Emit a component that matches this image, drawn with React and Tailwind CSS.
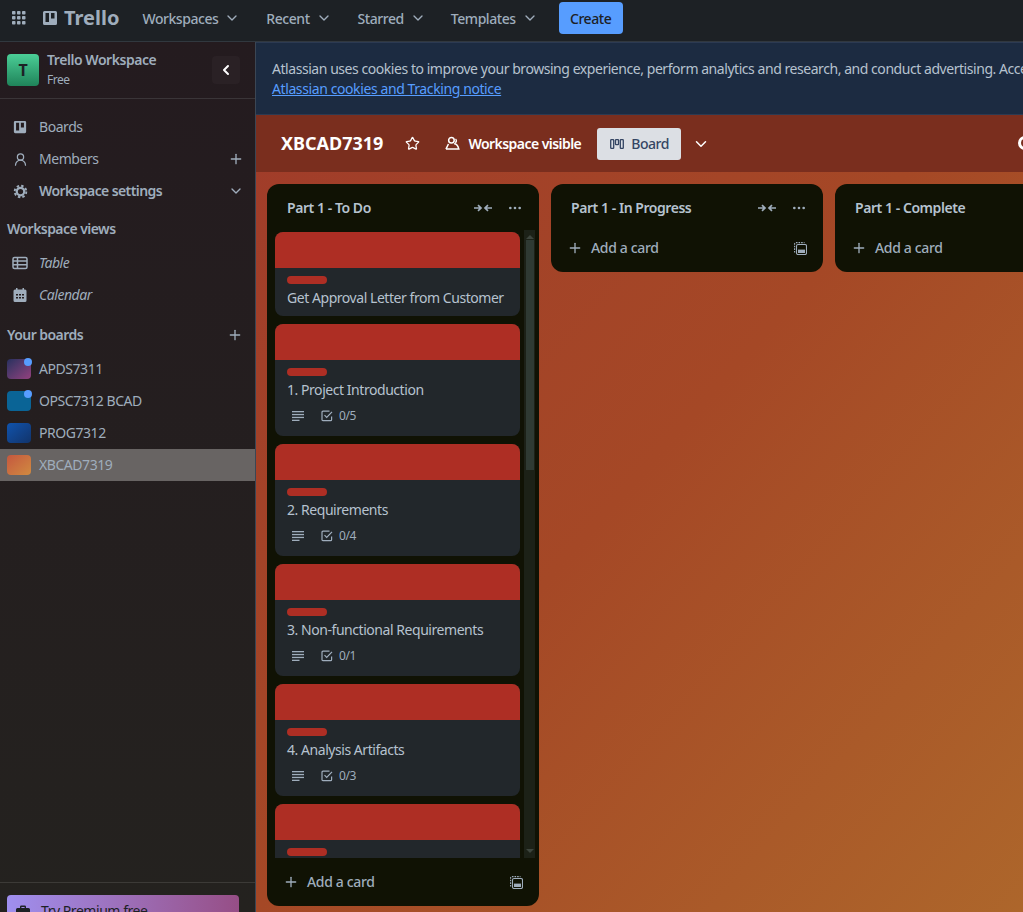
import { Plus, ChevronDown, ChevronLeft, Star, Ellipsis, UserRound } from "lucide-react";

const font = { fontFamily: '"Noto Sans", "Open Sans", sans-serif' };

const navItems = ["Workspaces", "Recent", "Starred", "Templates"];

const boards = [
  { name: "APDS7311", thumb: "bg-gradient-to-br from-[#27305f] to-[#93407f]", dot: true },
  { name: "OPSC7312 BCAD", thumb: "bg-[#0a6496]", dot: true },
  { name: "PROG7312", thumb: "bg-gradient-to-br from-[#0f53ad] to-[#11346b]" },
  { name: "XBCAD7319", thumb: "bg-gradient-to-br from-[#c4573f] to-[#d08a40]", active: true },
];

const cards = [
  { title: "Get Approval Letter from Customer" },
  { title: "1. Project Introduction", count: "0/5" },
  { title: "2. Requirements", count: "0/4" },
  { title: "3. Non-functional Requirements", count: "0/1" },
  { title: "4. Analysis Artifacts", count: "0/3" },
  { title: "5. Use Cases", count: "0/2" },
];

function AppGrid() {
  return (
    <svg width="16" height="16" viewBox="0 0 16 16" fill="currentColor">
      {[1, 6, 11].map((y) =>
        [1, 6, 11].map((x) => <rect key={`${x}-${y}`} x={x} y={y} width="3.5" height="3.5" rx="0.8" />)
      )}
    </svg>
  );
}

function BoardIcon({ size = 16 }) {
  return (
    <svg width={size} height={size} viewBox="0 0 16 16">
      <path
        fill="currentColor"
        fillRule="evenodd"
        d="M2.5 1h11A1.5 1.5 0 0 1 15 2.5v11a1.5 1.5 0 0 1-1.5 1.5h-11A1.5 1.5 0 0 1 1 13.5v-11A1.5 1.5 0 0 1 2.5 1zM3.5 3v9h3.5V3H3.5zM9 3v5.5h3.5V3H9z"
      />
    </svg>
  );
}

function GearIcon() {
  return (
    <svg width="15" height="15" viewBox="0 0 16 16" fill="none" stroke="currentColor">
      <circle cx="8" cy="8" r="4" strokeWidth="2.4" />
      <circle cx="8" cy="8" r="6.2" strokeWidth="2" strokeDasharray="2.6 2.27" />
    </svg>
  );
}

function TableIcon() {
  return (
    <svg width="16" height="14" viewBox="0 0 16 14" fill="none" stroke="currentColor" strokeWidth="1.5">
      <rect x="1" y="1.5" width="14" height="11" rx="1.5" />
      <path d="M1 5h14M1 8.8h14M5.5 1.5v11" />
    </svg>
  );
}

function CalendarIcon() {
  return (
    <svg width="14" height="14" viewBox="0 0 14 14" fill="currentColor">
      <path
        fillRule="evenodd"
        d="M3 0h1.5v1.5h5V0H11v1.5h1A1.5 1.5 0 0 1 13.5 3v9.5A1.5 1.5 0 0 1 12 14H2A1.5 1.5 0 0 1 .5 12.5V3A1.5 1.5 0 0 1 2 1.5h1V0zM3 6v1.5h2V6H3zm3 0v1.5h2V6H6zm3 0v1.5h2V6H9zM3 9v1.5h2V9H3zm3 0v1.5h2V9H6zm3 0v1.5h2V9H9z"
      />
    </svg>
  );
}

function CollapseIcon() {
  return (
    <svg width="18" height="10" viewBox="0 0 18 10" fill="none" stroke="currentColor" strokeWidth="1.7">
      <path d="M0 5h6.5M4 2.2 7 5 4 7.8M18 5h-6.5M14 2.2 11 5l3 2.8" />
    </svg>
  );
}

function TemplateIcon() {
  return (
    <svg width="13" height="13" viewBox="0 0 13 13" fill="none" stroke="currentColor" strokeWidth="1.1">
      <rect x="2.5" y="2.5" width="10" height="10" rx="1.5" />
      <path d="M.6 10.5V2A1.4 1.4 0 0 1 2 .6h8.5" strokeDasharray="1.6 1" />
      <rect x="4" y="7.6" width="7" height="3.4" fill="currentColor" stroke="none" />
    </svg>
  );
}

function DescriptionIcon() {
  return (
    <svg width="12" height="10" viewBox="0 0 12 10" fill="currentColor">
      <rect width="12" height="1.3" />
      <rect y="2.9" width="12" height="1.3" />
      <rect y="5.8" width="12" height="1.3" />
      <rect y="8.7" width="7.5" height="1.3" />
    </svg>
  );
}

function ChecklistIcon() {
  return (
    <svg width="12" height="12" viewBox="0 0 12 12" fill="none" stroke="currentColor" strokeWidth="1.2">
      <path d="M10.6 6.5v3.2a1 1 0 0 1-1 1H2a1 1 0 0 1-1-1V2.2a1 1 0 0 1 1-1h6.5" />
      <path d="M3.5 5.2 5.7 7.5 11 1.8" />
    </svg>
  );
}

function VisibleIcon() {
  return (
    <svg width="15" height="15" viewBox="0 0 14 14" fill="none" stroke="currentColor" strokeWidth="1.4">
      <circle cx="6" cy="4" r="2.6" />
      <path d="M.9 12.2 3.2 7.5M.9 12.2h8.8M8.5 7.2c2 0 3.5 1.2 4.4 5H9.7M9.5 6.2a2 2 0 0 0 .3-3.4" />
    </svg>
  );
}

function BoardViewIcon() {
  return (
    <svg width="14" height="10" viewBox="0 0 14 10" fill="none" stroke="currentColor" strokeWidth="1.3">
      <rect x="0.7" y="0.7" width="3" height="8.6" rx="0.6" />
      <rect x="5.5" y="0.7" width="3" height="5" rx="0.6" />
      <rect x="10.3" y="0.7" width="3" height="8.6" rx="0.6" />
    </svg>
  );
}

function BagIcon() {
  return (
    <svg width="14" height="14" viewBox="0 0 14 14" fill="currentColor">
      <path
        fillRule="evenodd"
        d="M4 3V1.8A1.3 1.3 0 0 1 5.3.5h3.4A1.3 1.3 0 0 1 10 1.8V3h2.5A1.5 1.5 0 0 1 14 4.5v7a1.5 1.5 0 0 1-1.5 1.5h-11A1.5 1.5 0 0 1 0 11.5v-7A1.5 1.5 0 0 1 1.5 3H4zm1.4 0h3.2V2H5.4v1z"
      />
    </svg>
  );
}

function SideRow({ icon, right, bold, italic, children }) {
  return (
    <div className="flex h-8 items-center pl-3 pr-[11px] text-[#9fadbc]">
      <span className="flex w-4 justify-center">{icon}</span>
      <span className={`ml-[11px] flex-1 pb-0.5 ${bold ? "font-semibold tracking-[-0.6px]" : ""} ${italic ? "italic" : ""}`}>{children}</span>
      {right}
    </div>
  );
}

function Card({ title, count }) {
  return (
    <div className="shrink-0 overflow-hidden rounded-lg bg-[#22272b] pb-2">
      <div className="h-9 bg-[#ae2e24]" />
      <div className="ml-3 mt-2 h-2 w-10 rounded bg-[#ae2e24]" />
      <div className="ml-3 mt-1 h-5 leading-5 text-[#b6c2cf]">{title}</div>
      {count && (
        <div className="ml-[17px] mt-1 flex h-6 items-center text-[12px] text-[#9fadbc]">
          <DescriptionIcon />
          <span className="ml-[17px]"><ChecklistIcon /></span>
          <span className="ml-1.5">{count}</span>
        </div>
      )}
    </div>
  );
}

function ListHead({ title }) {
  return (
    <div className="flex h-12 shrink-0 items-center pl-5 pr-4 text-[#b6c2cf]">
      <span className="flex-1 pb-0.5 font-semibold">{title}</span>
      <span className="text-[#9fadbc]"><CollapseIcon /></span>
      <Ellipsis size={16} className="ml-[15px] text-[#9fadbc]" />
    </div>
  );
}

function AddCard({ short }) {
  return (
    <div className={`flex shrink-0 items-center pl-4 pr-4 text-[#9fadbc] ${short ? "h-10 pb-2" : "h-12"}`}>
      <Plus size={16} />
      <span className="ml-2 flex-1 pb-0.5 font-medium tracking-[-0.35px]">Add a card</span>
      <TemplateIcon />
    </div>
  );
}

export default function App() {
  return (
    <div style={font} className="flex h-screen w-screen flex-col overflow-hidden bg-[#1d2125] text-[14px] tracking-[-0.45px]">
      {/* Top bar */}
      <header className="flex h-[42px] shrink-0 items-center border-b border-[#31383f] bg-[#1d2125] pb-[5px] pl-[11px] text-[#9fadbc]">
        <AppGrid />
        <div className="ml-[15px] flex items-center">
          <BoardIcon />
          <span className="ml-1.5 text-[20px] font-bold leading-none tracking-normal">Trello</span>
        </div>
        {navItems.map((n, i) => (
          <div key={n} className={`flex items-center ${i === 0 ? "ml-[23px]" : i === 3 ? "ml-[25px]" : "ml-[26px]"}`}>
            <span className="font-medium">{n}</span>
            <ChevronDown size={16} className="ml-1.5" />
          </div>
        ))}
        <button className="ml-[21px] h-8 w-16 rounded bg-[#579dff] font-medium text-[#1d2125]">Create</button>
      </header>

      <div className="flex min-h-0 flex-1">
        {/* Sidebar */}
        <aside className="flex w-[256px] shrink-0 flex-col border-r border-[#3b4654] bg-gradient-to-b from-[#241b1f] to-[#24221f]">
          <div className="flex h-[57px] shrink-0 items-center border-b border-[#3a3538] pl-[7px] pr-[15px]">
            <div className="flex h-8 w-8 items-center justify-center rounded bg-gradient-to-b from-[#4bce97] to-[#1f845a] text-[16px] font-bold text-[#1d2125]">T</div>
            <div className="ml-2 flex-1 text-[#9fadbc]">
              <div className="font-semibold leading-5">Trello Workspace</div>
              <div className="text-[12px] leading-5">Free</div>
            </div>
            <div className="flex h-7 w-7 items-center justify-center rounded bg-[#2a2125] text-white">
              <ChevronLeft size={16} strokeWidth={3} />
            </div>
          </div>

          <div className="mt-3">
            <SideRow icon={<BoardIcon size={14} />}>Boards</SideRow>
            <SideRow icon={<UserRound size={15} />} right={<Plus size={16} />}>Members</SideRow>
            <SideRow icon={<GearIcon />} bold right={<ChevronDown size={16} />}>Workspace settings</SideRow>
          </div>

          <div className="mt-[6px] flex h-8 items-center pb-0.5 pl-[7px] font-semibold tracking-[-0.55px] text-[#9fadbc]">Workspace views</div>
          <div className="mt-[2px]">
            <SideRow italic icon={<TableIcon />}>Table</SideRow>
            <SideRow italic icon={<CalendarIcon />}>Calendar</SideRow>
          </div>

          <div className="mt-[8px] flex h-8 items-center justify-between pl-[7px] pr-3 font-semibold tracking-[-0.55px] text-[#9fadbc]">
            <span className="pb-0.5">Your boards</span>
            <Plus size={16} />
          </div>
          <div className="mt-[2px]">
            {boards.map((b) => (
              <div key={b.name} className={`flex h-8 items-center pl-[7px] text-[#9fadbc] ${b.active ? "bg-[#686463]" : ""}`}>
                <div className={`relative h-5 w-6 rounded-sm ${b.thumb}`}>
                  {b.dot && <span className="absolute -right-[1px] -top-[1px] h-2 w-2 rounded-full bg-[#579dff]" />}
                </div>
                <span className="ml-2 pb-0.5">{b.name}</span>
              </div>
            ))}
          </div>

          <div className="mt-auto h-[30px] shrink-0 border-t border-[#3c3a37] pl-[7px] pt-3">
            <div className="flex h-10 w-[232px] rounded-t-sm bg-gradient-to-r from-[#9f8fef] to-[#964e86] pl-[9px] pt-[10px] text-[#1d2125]">
              <BagIcon />
              <span className="-mt-[5px] ml-[11px]">Try Premium free</span>
            </div>
          </div>
        </aside>

        {/* Main */}
        <main className="flex min-w-0 flex-1 flex-col bg-gradient-to-br from-[#a03b2a] via-[#a54826] to-[#ad662b]">
          <div className="h-[73px] shrink-0 whitespace-nowrap border-y border-[#2c3a52] bg-[#1c2b41] pl-4 pt-[16px] leading-5 text-[#b6c2cf]">
            <div>Atlassian uses cookies to improve your browsing experience, perform analytics and research, and conduct advertising. Accept all cookies</div>
            <a className="tracking-[-0.4px] text-[#579dff] underline">Atlassian cookies and Tracking notice</a>
          </div>

          <div className="relative flex h-[57px] shrink-0 items-center bg-[#7a2e1e] pl-[25px] text-white">
            <span className="text-[18px] font-bold tracking-normal">XBCAD7319</span>
            <Star size={15} strokeWidth={2} className="ml-[22px]" />
            <span className="ml-[25px]"><VisibleIcon /></span>
            <span className="ml-2 font-semibold tracking-[-0.55px]">Workspace visible</span>
            <div className="ml-4 flex h-8 w-[84px] items-center rounded-[3px] bg-[#dcdfe4] pl-[13px] text-[#344563]">
              <BoardViewIcon />
              <span className="ml-[7px] font-medium">Board</span>
            </div>
            <ChevronDown size={18} className="ml-[11px]" />
            <span className="absolute left-[762px] top-[21px] h-3.5 w-3.5 rounded-full border-[3px] border-white" />
          </div>

          {/* Lists */}
          <div className="flex items-start gap-3 overflow-hidden pl-[11px] pt-3">
            <section className="flex h-[722px] w-[272px] shrink-0 flex-col rounded-xl bg-[#101204]">
              <ListHead title="Part 1 - To Do" />
              <div className="flex min-h-0 flex-1 pl-2">
                <div className="flex w-[245px] flex-col gap-2 overflow-hidden">
                  {cards.map((c) => <Card key={c.title} {...c} />)}
                </div>
                <div className="ml-1 -mt-[2px] flex w-[11px] flex-col items-center bg-[#1c2117]">
                  <span className="mt-[5px] h-0 w-0 border-x-[4px] border-b-[4px] border-x-transparent border-b-[#3d453d]" />
                  <div className="mt-[1px] h-[230px] w-[8px] bg-[#2f3a33]" />
                  <span className="mb-[5px] mt-auto h-0 w-0 border-x-[4px] border-t-[4px] border-x-transparent border-t-[#3d453d]" />
                </div>
              </div>
              <AddCard />
            </section>

            <section className="w-[272px] shrink-0 rounded-xl bg-[#101204]">
              <ListHead title="Part 1 - In Progress" />
              <AddCard short />
            </section>

            <section className="w-[272px] shrink-0 rounded-xl bg-[#101204]">
              <ListHead title="Part 1 - Complete" />
              <AddCard short />
            </section>
          </div>
        </main>
      </div>
    </div>
  );
}
